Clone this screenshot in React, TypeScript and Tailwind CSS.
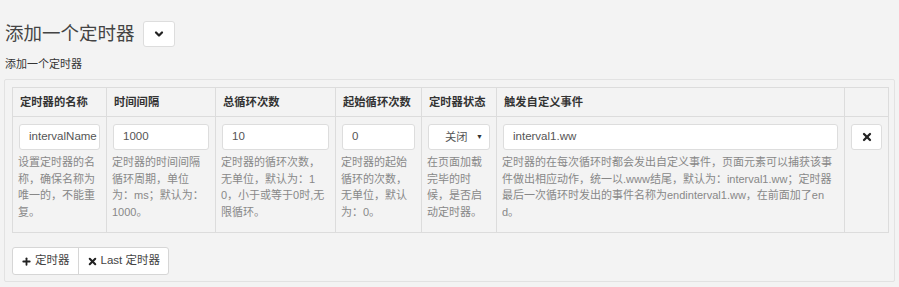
import { Plus, X, ChevronDown } from "lucide-react";

const font = { fontFamily: '"Liberation Sans", "Noto Sans CJK SC", sans-serif' };

type Col = { title: string; width: string; value?: string; desc?: string; select?: boolean; wrap: string };

const cols: Col[] = [
  { title: "定时器的名称", width: "w-[94px]", value: "intervalName", wrap: "break-all", desc: "设置定时器的名称，确保名称为唯一的，不能重复。" },
  { title: "时间间隔", width: "w-[109px]", value: "1000", wrap: "break-normal", desc: "定时器的时间间隔循环周期，单位为：ms；默认为：1000。" },
  { title: "总循环次数", width: "w-[120px]", value: "10", wrap: "break-all", desc: "定时器的循环次数，无单位，默认为：10，小于或等于0时,无限循环。" },
  { title: "起始循环次数", width: "w-[86px]", value: "0", wrap: "break-all", desc: "定时器的起始循环的次数，无单位，默认为：0。" },
  { title: "定时器状态", width: "w-[75px]", select: true, wrap: "break-all", desc: "在页面加载完毕的时候，是否启动定时器。" },
  { title: "触发自定义事件", width: "w-[348px]", value: "interval1.ww", wrap: "break-all", desc: "定时器的在每次循环时都会发出自定义事件，页面元素可以捕获该事件做出相应动作，统一以.www结尾，默认为：interval1.ww；定时器最后一次循环时发出的事件名称为endinterval1.ww，在前面加了end。" },
];

export default function App() {
  return (
    <div className="w-[899px] h-[287px] bg-[#f3f3f3] text-[#333] overflow-hidden" style={font}>
      <div className="flex items-center gap-[8px] pl-[5px] pt-[21px]">
        <h1 className="text-[18.5px] leading-[26px] text-[#444]">添加一个定时器</h1>
        <button className="w-[32px] h-[26px] bg-white border border-[#ddd] rounded-[3px] flex items-center justify-center">
          <ChevronDown size={12} strokeWidth={4.5} className="text-[#222]" />
        </button>
      </div>
      <div className="pl-[5px] pt-[9px] text-[11px] leading-[16px] text-[#333]">添加一个定时器</div>
      <div className="ml-[4px] mt-[7px] mr-[4px] border border-[#e2e2e2] rounded-[2px] pl-[7px] pt-[7px] pb-[7px] pr-[6px] h-[203px]">
        <table className="border-collapse table-fixed w-[877px]">
          <thead>
            <tr className="h-[29px]">
              {cols.map((c) => (
                <th key={c.title} className={`${c.width} border border-[#dcdcdc] text-left font-bold text-[11.3px] px-[7px] text-[#333]`}>
                  {c.title}
                </th>
              ))}
              <th className="border border-[#dcdcdc]"></th>
            </tr>
          </thead>
          <tbody>
            <tr className="h-[116px] align-top">
              {cols.map((c) => (
                <td key={c.title} className="border border-[#dcdcdc] px-[5px] pt-[7px]">
                  <div className="px-[1px]">
                    {c.select ? (
                      <div className="h-[26px] bg-white border border-[#ddd] rounded-[3px] flex items-center justify-between pl-[16px] pr-[6px] text-[11.3px] text-[#555]">
                        <span>关闭</span>
                        <span className="text-[7px] text-[#333]">▼</span>
                      </div>
                    ) : (
                      <div className="h-[26px] bg-white border border-[#ddd] rounded-[3px] flex items-center px-[9px] text-[11.5px] text-[#555] overflow-hidden whitespace-nowrap">
                        {c.value}
                      </div>
                    )}
                  </div>
                  <p className={`mt-[4px] text-[11px] leading-[16.7px] text-[#888] ${c.wrap}`}>{c.desc}</p>
                </td>
              ))}
              <td className="border border-[#dcdcdc] px-[6px] pt-[7px]">
                <button className="w-[31px] h-[26px] bg-white border border-[#ddd] rounded-[3px] flex items-center justify-center">
                  <X size={12} strokeWidth={4.5} className="text-[#222]" />
                </button>
              </td>
            </tr>
          </tbody>
        </table>
        <div className="mt-[14px] inline-flex border border-[#d6d6d6] rounded-[3px] bg-white text-[11.5px] text-[#444]">
          <button className="h-[26px] px-[8px] flex items-center gap-[3px] border-r border-[#d6d6d6]">
            <Plus size={11} strokeWidth={4} className="text-[#222]" />
            <span>定时器</span>
          </button>
          <button className="h-[26px] px-[8px] flex items-center gap-[3px]">
            <X size={11} strokeWidth={4.5} className="text-[#222]" />
            <span>Last 定时器</span>
          </button>
        </div>
      </div>
    </div>
  );
}
